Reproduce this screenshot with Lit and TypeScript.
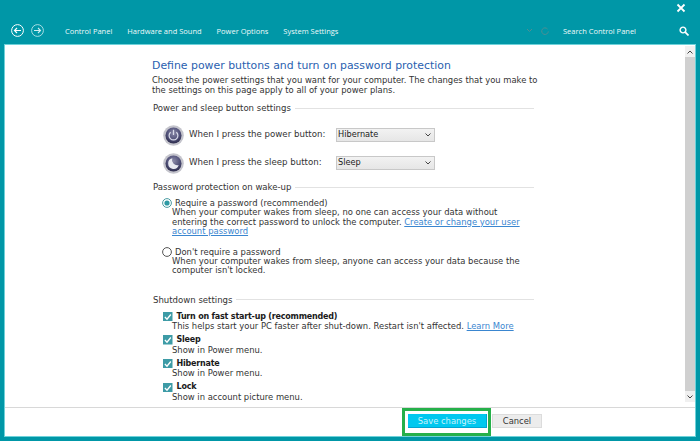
import { LitElement, html, css, svg } from "lit";
import { customElement } from "lit/decorators.js";

const pwrIcon = (moon: boolean) => html`<svg class="pi" viewBox="0 0 22 22" width="21" height="21">
  <defs><radialGradient id="g${moon ? 1 : 0}" cx="50%" cy="35%" r="65%"><stop offset="0" stop-color="#8a8aa8"/><stop offset="0.6" stop-color="#52527a"/><stop offset="1" stop-color="#2c2c4c"/></radialGradient></defs>
  <circle cx="11" cy="11" r="10.8" fill="#c4c4cc"/>
  <circle cx="11" cy="11" r="8.4" fill="url(#g${moon ? 1 : 0})"/>
  ${moon
    ? svg`<path d="M9.8 5.6 A5.6 5.6 0 1 0 16.4 12.6 A5.4 5.4 0 0 1 9.8 5.6Z" fill="#e8eaf2"/>`
    : svg`<path d="M8 7.6 A4.6 4.6 0 1 0 14 7.6" fill="none" stroke="#d8dae8" stroke-width="1.3"/><path d="M11 5v5.5" stroke="#d8dae8" stroke-width="1.3"/>`}
</svg>`;

const check = html`<svg class="cb" viewBox="0 0 10 10" width="9.5" height="9.5"><rect width="10" height="10" fill="#3d9ba6"/><path d="M2 5.2 4.2 7.5 8.2 2.6" fill="none" stroke="#fff" stroke-width="1.4"/></svg>`;

@customElement("app-root")
export class AppRoot extends LitElement {
  static styles = css`
    :host { display: block; width: 700px; height: 441px; overflow: hidden; }
    .win { width: 700px; height: 441px; background: #0097a7; display: flex; flex-direction: column; box-sizing: border-box; font-family: "DejaVu Sans", sans-serif; color: #333; white-space: nowrap; }
    .close { height: 16px; display: flex; justify-content: flex-end; align-items: center; padding-right: 14px; box-sizing: border-box; }
    .nav { height: 29px; display: flex; align-items: center; color: #eef9fa; font: 7.5px "Open Sans", sans-serif; }
    .arrows { display: flex; gap: 7px; margin-left: 10.5px; width: 54.5px; }
    .crumbs { display: flex; gap: 15px; width: 461px; }
    .tools { display: flex; gap: 8px; width: 37px; align-items: center; }
    .search { flex: 1; }
    .mag { margin-right: 11px; }
    .panel { margin: 0 5px; height: 391px; display: flex; flex-direction: column; background: #fff; box-shadow: 0 0 0 1px #6ed2da; position: relative; }
    .sheet { height: 362px; display: flex; }
    .scroll-area { flex: 1; padding: 14px 0 0 147px; font-size: 8.42px; line-height: 9.5px; }
    h1 { margin: 0; font-weight: 400; font-size: 10.9px; line-height: 14px; color: #2a5fb0; }
    p { margin: 0; }
    .intro { margin-top: 2px; line-height: 10px; }
    .sec { display: flex; align-items: center; gap: 4px; width: 381px; margin-left: 1px; line-height: 12px; font-size: 8.55px; }
    .sec::after { content: ""; flex: 1; height: 1px; background: #e2e2e2; }
    .s1 { margin-top: 7px; }
    .rows { margin-top: 7px; display: flex; flex-direction: column; }
    .row { display: flex; align-items: center; margin-left: 10.5px; height: 28px; font-size: 8.65px; }
    .pi { margin-right: 5.5px; flex: none; }
    .lab { width: 147px; }
    .sel { width: 99px; height: 14px; box-sizing: border-box; border: 1px solid #c8c8c8; background: linear-gradient(#f2f2f2, #e6e6e6); display: flex; align-items: center; justify-content: space-between; padding: 0 3px 0 1px; color: #222; font-size: 8.2px; }
    .opt { margin-left: 10px; }
    .head { display: flex; align-items: center; gap: 3px; line-height: 10px; }
    .desc { margin-left: 10px; }
    a { color: #3a86d0; text-decoration: underline; }
    .radio { width: 10px; height: 10px; flex: none; }
    .s2 { margin-top: 4px; }
    .o1 { margin-top: 5px; }
    .o2 { margin-top: 10px; }
    .s3 { margin-top: 18px; }
    .checks { margin-top: 6px; margin-left: 11px; display: flex; flex-direction: column; gap: 3.6px; }
    .ch .head { gap: 4px; color: #1a1a1a; font-weight: 700; font-size: 8px; letter-spacing: -0.2px; }
    .ch .desc { margin-left: 9px; margin-top: .5px; }
    .bar { width: 10px; height: 356px; margin-top: 1px; display: flex; flex-direction: column; }
    .thumb { flex: 1; background: #d0d0d0; }
    .btnc { height: 11px; flex: none; background: #f0f0f0; display: flex; align-items: center; justify-content: center; }
    .foot { height: 29px; border-top: 1px solid #d8d8d8; box-sizing: border-box; display: flex; align-items: flex-start; padding: 6px 0 0 403px; gap: 5px; }
    .sbtn { width: 79px; height: 14px; box-sizing: border-box; background: #00c8ef; border-right: 1px solid #00a5d0; border-bottom: 1px solid #00a5d0; color: #c8f2fb; font-size: 8.4px; display: flex; align-items: center; justify-content: center; }
    .cbtn { width: 50px; height: 14px; box-sizing: border-box; background: #ececec; border: 1px solid #dcdcdc; color: #333; font-size: 8.4px; display: flex; align-items: center; justify-content: center; }
    .mark { position: absolute; left: 397px; top: 363px; width: 89px; height: 28px; box-sizing: border-box; border: 3px solid #26b04a; }
  `;

  render() {
    const down = html`<svg width="6" height="4" viewBox="0 0 6 4"><path d="M.5.5 3 3 5.5.5" fill="none" stroke="#444" stroke-width="1"/></svg>`;
    return html`<div class="win">
      <div class="close"><svg width="10" height="10" viewBox="0 0 10 10"><path d="M1.5 1.5l7 7M8.5 1.5l-7 7" stroke="#fff" stroke-width="1.8"/></svg></div>
      <div class="nav">
        <div class="arrows">
          <svg width="13" height="13" viewBox="0 0 13 13"><circle cx="6.5" cy="6.5" r="5.9" fill="none" stroke="#fff" stroke-width="1"/><path d="M10 6.5H3.5M6 4 3.5 6.5 6 9" fill="none" stroke="#fff" stroke-width="1.2"/></svg>
          <svg width="13" height="13" viewBox="0 0 13 13"><circle cx="6.5" cy="6.5" r="5.9" fill="none" stroke="#cfeef1" stroke-width=".8"/><path d="M3 6.5H9.5M7 4 9.5 6.5 7 9" fill="none" stroke="#cfeef1" stroke-width="1.1"/></svg>
        </div>
        <div class="crumbs"><span>Control Panel</span><span>Hardware and Sound</span><span>Power Options</span><span>System Settings</span></div>
        <div class="tools">
          <svg width="7" height="5" viewBox="0 0 7 5"><path d="M1 1l2.5 2.5L6 1" fill="none" stroke="#4f8e94" stroke-width="1"/></svg>
          <svg width="8" height="8" viewBox="0 0 8 8"><path d="M6.5 2A3.3 3.3 0 1 0 7.3 4.4" fill="none" stroke="#4f8e94" stroke-width="1"/></svg>
        </div>
        <div class="search">Search Control Panel</div>
        <svg class="mag" width="10" height="10" viewBox="0 0 10 10"><circle cx="4" cy="4" r="2.9" fill="none" stroke="#fff" stroke-width="1.4"/><path d="M6.2 6.2 9.5 9.5" stroke="#fff" stroke-width="1.7"/></svg>
      </div>
      <div class="panel">
        <div class="sheet">
          <div class="scroll-area">
            <h1>Define power buttons and turn on password protection</h1>
            <p class="intro">Choose the power settings that you want for your computer. The changes that you make to<br>the settings on this page apply to all of your power plans.</p>
            <div class="sec s1">Power and sleep button settings</div>
            <div class="rows">
              <div class="row">${pwrIcon(false)}<span class="lab">When I press the power button:</span><div class="sel">Hibernate${down}</div></div>
              <div class="row">${pwrIcon(true)}<span class="lab">When I press the sleep button:</span><div class="sel">Sleep${down}</div></div>
            </div>
            <div class="sec s2">Password protection on wake-up</div>
            <div class="opt o1">
              <div class="head"><svg class="radio" viewBox="0 0 10 10"><circle cx="5" cy="5" r="4.4" fill="#fff" stroke="#4a9aa0"/><circle cx="5" cy="5" r="2.6" fill="#2f9aa4"/></svg>Require a password (recommended)</div>
              <p class="desc">When your computer wakes from sleep, no one can access your data without<br>entering the correct password to unlock the computer. <a>Create or change your user<br>account password</a></p>
            </div>
            <div class="opt o2">
              <div class="head"><svg class="radio" viewBox="0 0 10 10"><circle cx="5" cy="5" r="4.4" fill="#fff" stroke="#555"/></svg>Don't require a password</div>
              <p class="desc">When your computer wakes from sleep, anyone can access your data because the<br>computer isn't locked.</p>
            </div>
            <div class="sec s3">Shutdown settings</div>
            <div class="checks">
              <div class="ch"><div class="head">${check}Turn on fast start-up (recommended)</div><p class="desc">This helps start your PC faster after shut-down. Restart isn't affected. <a>Learn More</a></p></div>
              <div class="ch"><div class="head">${check}Sleep</div><p class="desc">Show in Power menu.</p></div>
              <div class="ch"><div class="head">${check}Hibernate</div><p class="desc">Show in Power menu.</p></div>
              <div class="ch"><div class="head">${check}Lock</div><p class="desc">Show in account picture menu.</p></div>
            </div>
          </div>
          <div class="bar">
            <div class="btnc"><svg width="6" height="4" viewBox="0 0 6 4"><path d="M.5 3.5 3 1 5.5 3.5" fill="none" stroke="#444"/></svg></div>
            <div class="thumb"></div>
            <div class="btnc">${down}</div>
          </div>
        </div>
        <div class="foot"><div class="sbtn">Save changes</div><div class="cbtn">Cancel</div></div>
        <div class="mark"></div>
      </div>
    </div>`;
  }
}
